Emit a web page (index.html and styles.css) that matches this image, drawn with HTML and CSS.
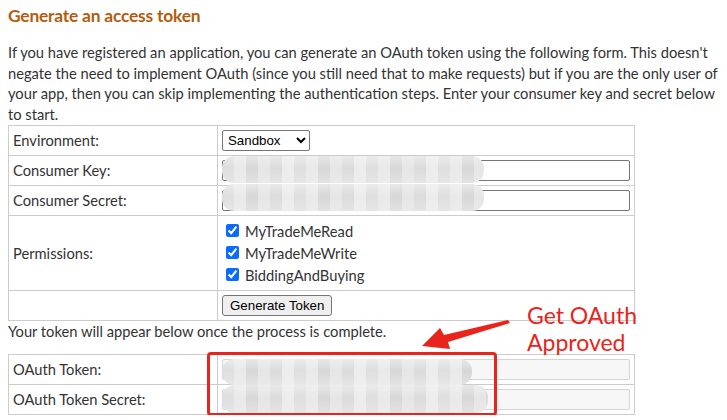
FILE: index.html
```html
<!DOCTYPE html>
<html>
<head>
<meta charset="utf-8">
<link rel="stylesheet" href="styles.css">
</head>
<body>
<div class="page">
  <h2 class="title">Generate an access token</h2>
  <p class="intro">If you have registered an application, you can generate an OAuth token using the following form. This doesn't negate the need to implement OAuth (since you still need that to make requests) but if you are the only user of your app, then you can skip implementing the authentication steps. Enter your consumer key and secret below to start.</p>
  <table class="form">
    <tr class="row-env">
      <td class="label">Environment:</td>
      <td class="field"><select class="select"><option>Sandbox</option></select></td>
    </tr>
    <tr class="row-input">
      <td class="label">Consumer Key:</td>
      <td class="field"><input class="text" type="text"></td>
    </tr>
    <tr class="row-input">
      <td class="label">Consumer Secret:</td>
      <td class="field"><input class="text" type="text"></td>
    </tr>
    <tr class="row-perm">
      <td class="label">Permissions:</td>
      <td class="field">
        <label class="check"><input type="checkbox" checked><span>MyTradeMeRead</span></label>
        <label class="check"><input type="checkbox" checked><span>MyTradeMeWrite</span></label>
        <label class="check"><input type="checkbox" checked><span>BiddingAndBuying</span></label>
      </td>
    </tr>
    <tr class="row-btn">
      <td class="label"></td>
      <td class="field"><button class="btn">Generate Token</button></td>
    </tr>
  </table>
  <p class="note">Your token will appear below once the process is complete.</p>
  <table class="form tokens">
    <tr class="row-token">
      <td class="label">OAuth Token:</td>
      <td class="field"><input class="text disabled" type="text" disabled></td>
    </tr>
    <tr class="row-token">
      <td class="label">OAuth Token Secret:</td>
      <td class="field"><input class="text disabled" type="text" disabled></td>
    </tr>
  </table>

  <div class="blur blur-key"></div>
  <div class="blur blur-secret"></div>
  <div class="blur blur-token"></div>
  <div class="blur blur-tsecret"></div>
  <div class="redbox"></div>
  <svg class="arrow" width="100" height="40" viewBox="0 0 100 40">
    <polygon fill="#e8241c" points="88,3 90,6 28,25 30,32 2,29 20,11 24,18"/>
  </svg>
  <div class="callout">Get OAuth<br>Approved</div>
</div>
</body>
</html>
```

FILE: styles.css
```css
html, body {
  margin: 0;
  padding: 0;
  background: #fff;
}
.page {
  position: relative;
  padding: 0 8px;
  font-family: Lato, "Open Sans", sans-serif;
  color: #333;
  font-size: 14.7px;
}
.title {
  margin: 0;
  padding-top: 4px;
  font-size: 17.4px;
  line-height: 24px;
  font-weight: 700;
  letter-spacing: -0.2px;
  color: #b35c0c;
}
.intro {
  margin: 14px 0 0;
  line-height: 20.7px;
  font-size: 14.7px;
}
.form {
  border-collapse: collapse;
  width: 627px;
  margin-top: 0;
}
.form td {
  border: 1px solid #ccc;
  padding: 0 4px;
  font-size: 14.7px;
}
.label {
  width: 200px;
}
.row-env td, .row-input td { height: 29px; }
.row-perm td { height: 74px; }
.row-btn td { height: 29px; }
.row-token td { height: 29px; }
.select {
  font-family: "Liberation Sans", Arial, sans-serif;
  font-size: 13.3px;
  width: 88px;
  height: 21px;
  border: 1px solid #767676;
  border-radius: 2px;
  background: #fff;
  color: #000;
  padding: 0 1px;
}
.text {
  display: block;
  box-sizing: border-box;
  width: 408px;
  height: 21px;
  border: 1px solid #767676;
  border-radius: 2px;
  margin: 0;
}
.text.disabled {
  background: #f7f7f7;
  border-color: #d4d4d4;
}
.check {
  display: flex;
  align-items: center;
  height: 22px;
  gap: 6px;
}
.check input {
  margin: 0 0 0 4px;
  width: 13px;
  height: 13px;
  accent-color: #0a6cff;
}
.btn {
  font-family: "Liberation Sans", Arial, sans-serif;
  font-size: 13.3px;
  color: #000;
  height: 21px;
  padding: 0 7px;
  border: 1px solid #767676;
  border-radius: 3px;
  background: #efefef;
}
.note {
  margin: 0;
  line-height: 21px;
}
.tokens {
  margin-top: 12px;
}
.blur {
  position: absolute;
  border-radius: 12px;
  filter: blur(0.6px);
  background:
    linear-gradient(180deg, rgba(245,245,245,0.55), rgba(255,255,255,0) 45%, rgba(240,240,240,0.45)),
    repeating-linear-gradient(90deg, #dedede 0 12px, #e9e9e9 12px 24px, #d7d7d7 24px 36px, #e5e5e5 36px 48px, #dbdbdb 48px 60px, #ececec 60px 72px);
}
.blur-key { left: 222px; top: 156px; width: 262px; height: 27px; }
.blur-secret { left: 222px; top: 184px; width: 262px; height: 27px; }
.blur-token { left: 222px; top: 359px; width: 250px; height: 26px; }
.blur-tsecret { left: 222px; top: 385px; width: 266px; height: 28px; }
.redbox {
  position: absolute;
  left: 207px;
  top: 352px;
  width: 284px;
  height: 58px;
  border: 3px solid #e8241c;
  border-radius: 4px;
}
.arrow {
  position: absolute;
  left: 420px;
  top: 317px;
}
.callout {
  position: absolute;
  left: 527px;
  top: 302px;
  color: #e8241c;
  font-size: 23px;
  line-height: 27px;
  font-family: Lato, "Open Sans", sans-serif;
}
```
